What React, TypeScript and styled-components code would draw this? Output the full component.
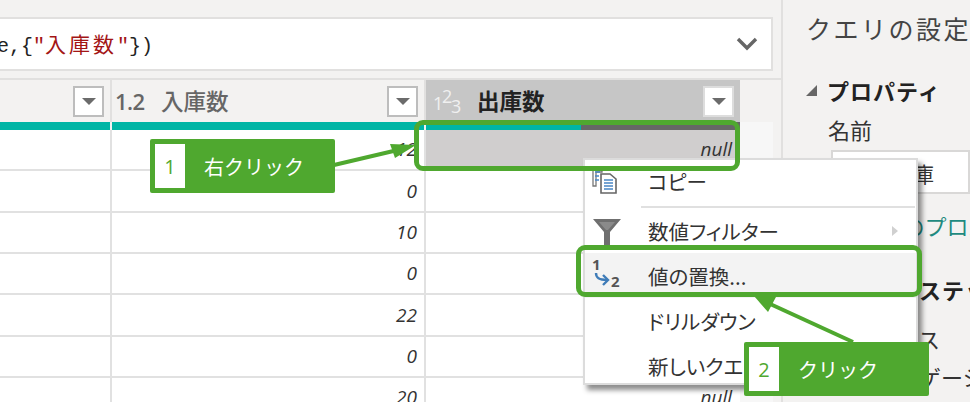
import React from "react";
import styled, { createGlobalStyle } from "styled-components";

const Global = createGlobalStyle`
  html, body { margin: 0; padding: 0; background: #f3f2f1; }
  body { font-family: "Noto Sans CJK JP", "Noto Sans", sans-serif; }
  #root { width: 970px; height: 402px; overflow: hidden; }
`;

const Page = styled.div`
  position: relative;
  width: 970px;
  height: 402px;
  overflow: hidden;
  display: flex;
  background: #f3f2f1;
`;

const Main = styled.div`
  width: 781px;
  flex: none;
  display: flex;
  flex-direction: column;
  padding-top: 17px;
  box-sizing: border-box;
  overflow: hidden;
`;

const FormulaBar = styled.div`
  height: 54px;
  width: 775px;
  flex: none;
  margin-left: -2px;
  box-sizing: border-box;
  background: #fff;
  border: 2px solid #e1e0df;
  display: flex;
  align-items: center;
  justify-content: space-between;
  padding-right: 13px;
  overflow: hidden;
`;

const Code = styled.div`
  font-family: "Liberation Mono", "Noto Sans CJK JP", monospace;
  font-size: 20px;
  color: #222;
  margin-left: -3px;
  margin-top: -2px;
  white-space: pre;
  display: flex;
  align-items: baseline;
`;

const Str = styled.span`
  color: #a31515;
`;

const StrCjk = styled.span`
  color: #a31515;
  font-family: "Noto Sans CJK JP", sans-serif;
  font-size: 21px;
  letter-spacing: 3px;
`;

const Grid = styled.div`
  margin-top: 7px;
  flex: none;
  height: 340px;
  display: flex;
  flex-direction: column;
  border-top: 2px solid #e1e0df;
  background: linear-gradient(to right, #fff 740px, #f7f7f7 740px, #f7f7f7 773px, #f3f2f1 773px);
`;

const HeaderRow = styled.div`
  display: grid;
  grid-template-columns: 112px 314px 314px;
  height: 42px;
  flex: none;
  background: #f3f2f1;
`;

const HeaderCell = styled.div<{ $selected?: boolean }>`
  box-sizing: border-box;
  display: flex;
  align-items: center;
  padding: 0 6px 0 3px;
  border-right: ${(p) => (p.$selected ? "0" : "2px solid #e1e0df")};
  background: ${(p) => (p.$selected ? "#c6c6c6" : "#f3f2f1")};
  color: ${(p) => (p.$selected ? "#222" : "#666")};
  font-size: 22.5px;
  font-weight: ${(p) => (p.$selected ? 700 : 500)};
`;

const TypeLabel = styled.span`
  font-family: "Open Sans", sans-serif;
  font-weight: 600;
  font-size: 22px;
  width: 46px;
  flex: none;
  letter-spacing: -0.5px;
`;

const TypeDigits = styled.span`
  position: relative;
  width: 46px;
  height: 34px;
  flex: none;
  margin-left: 2px;
  color: #f0f0f0;
  font-family: "Open Sans", sans-serif;
  font-weight: 400;
`;

const Digit = styled.span<{ $x: number; $y: number }>`
  position: absolute;
  left: ${(p) => p.$x}px;
  top: ${(p) => p.$y}px;
  font-size: 18px;
  line-height: 18px;
`;

const ColName = styled.span`
  flex: 1;
  line-height: 30px;
  margin-top: -3px;
`;

const FilterButton = styled.div<{ $selected?: boolean }>`
  width: 31px;
  height: 31px;
  box-sizing: border-box;
  flex: none;
  background: #fff;
  border: 2px solid ${(p) => (p.$selected ? "#ddd" : "#bdbdbd")};
  display: flex;
  align-items: center;
  justify-content: center;
  &::after {
    content: "";
    border-left: 7px solid transparent;
    border-right: 7px solid transparent;
    border-top: 7px solid #6b6b6b;
  }
`;

const QualityRow = styled.div`
  display: grid;
  grid-template-columns: 110px 2px 312px 2px 314px;
  height: 8px;
  flex: none;
`;

const Quality = styled.div`
  background: #00b5a5;
`;

const QualityGap = styled.div`
  background: #f3f2f1;
`;

const QualitySplit = styled.div`
  background: linear-gradient(to right, #00b5a5 155px, #666 155px);
`;

const Row = styled.div`
  display: grid;
  grid-template-columns: 112px 314px 314px;
  height: 41.35px;
  flex: none;
`;

const Cell = styled.div<{ $selected?: boolean; $last?: boolean }>`
  box-sizing: border-box;
  border-right: ${(p) => (p.$last ? "0" : "2px solid #e1e1e1")};
  border-bottom: 2px solid #e1e1e1;
  background: ${(p) => (p.$selected ? "#d0cece" : "#fff")};
  display: flex;
  align-items: center;
  justify-content: flex-end;
  padding-right: ${(p) => (p.$last ? "8px" : "7px")};
  padding-bottom: 1px;
  font-family: "Open Sans", sans-serif;
  font-style: italic;
  font-size: 19px;
  color: #333;
`;

const Side = styled.aside`
  flex: 1;
  border-left: 2px solid #e1e0df;
  padding: 11px 0 0 23px;
  box-sizing: border-box;
  color: #333;
  white-space: nowrap;
  overflow: hidden;
`;

const SideTitle = styled.div`
  font-size: 25px;
  line-height: 34px;
  letter-spacing: 2.5px;
  color: #444;
`;

const SideHeading = styled.div`
  display: flex;
  align-items: center;
  font-size: 22px;
  font-weight: 700;
  line-height: 30px;
  letter-spacing: 1px;
  color: #222;
  margin-top: 30px;
  &::before {
    content: "";
    width: 0;
    height: 0;
    border-left: 11px solid transparent;
    border-bottom: 11px solid #666;
    margin-right: 10px;
    flex: none;
  }
`;

const SideLabel = styled.div`
  font-size: 22px;
  line-height: 30px;
  margin: 9px 0 0 22px;
`;

const NameInput = styled.div`
  margin: 6px 0 0 25px;
  height: 44px;
  box-sizing: border-box;
  background: #fff;
  border: 2px solid #d9d8d7;
  font-size: 21px;
  line-height: 42px;
  padding-left: 59px;
`;

const SideLink = styled.div`
  font-size: 22px;
  line-height: 30px;
  color: #1e8a80;
  margin: 16px 0 0 33px;
`;

const StepsHeading = styled(SideHeading)`
  margin-top: 34px;
`;

const Step = styled.div<{ $gap: number }>`
  font-size: 22px;
  line-height: 28px;
  margin: ${(p) => p.$gap}px 0 0 69px;
`;

const Menu = styled.div`
  position: absolute;
  left: 583px;
  top: 158px;
  width: 335px;
  height: 227px;
  box-sizing: border-box;
  background: #fff;
  border: 2px solid #dcdcdc;
  box-shadow: 4px 5px 5px rgba(0, 0, 0, 0.45);
  display: flex;
  flex-direction: column;
  padding-top: 1px;
`;

const MenuItem = styled.div<{ $active?: boolean; $first?: boolean }>`
  position: relative;
  height: 45px;
  flex: none;
  box-sizing: border-box;
  padding-bottom: ${(p) => (p.$first ? "5px" : "0")};
  display: grid;
  grid-template-columns: 63px 1fr 24px;
  align-items: center;
  background: ${(p) => (p.$active ? "#f3f3f3" : "transparent")};
  font-size: 20.5px;
  font-feature-settings: "palt";
  color: #333;
`;

const MenuIcon = styled.span`
  display: flex;
  justify-content: flex-start;
  padding-left: 7px;
`;

const Separator = styled.div`
  height: 2px;
  margin: 0 1px 0 56px;
  background: #e0e0e0;
  flex: none;
`;

const SubArrow = styled.span`
  width: 0;
  height: 0;
  border-top: 5px solid transparent;
  border-bottom: 5px solid transparent;
  border-left: 6px solid #d0d0d0;
`;

const Highlight = styled.div<{ $l: number; $t: number; $w: number; $h: number }>`
  position: absolute;
  left: ${(p) => p.$l}px;
  top: ${(p) => p.$t}px;
  width: ${(p) => p.$w}px;
  height: ${(p) => p.$h}px;
  box-sizing: border-box;
  border: 5px solid #4fa82f;
  border-radius: 9px;
`;

const Callout = styled.div<{ $l: number; $t: number }>`
  position: absolute;
  left: ${(p) => p.$l}px;
  top: ${(p) => p.$t}px;
  width: 185px;
  height: 54px;
  box-sizing: border-box;
  padding: 5px;
  background: #4fa82f;
  border-radius: 2px;
  display: flex;
  align-items: stretch;
  color: #fff;
  font-size: 20px;
`;

const CalloutNum = styled.div`
  width: 30px;
  flex: none;
  background: #fff;
  color: #4fa82f;
  font-family: "Open Sans", sans-serif;
  font-size: 20px;
  display: flex;
  align-items: center;
  justify-content: center;
`;

const CalloutText = styled.div`
  display: flex;
  align-items: center;
  padding-left: 19px;
  white-space: nowrap;
`;

const Arrows = styled.svg`
  position: absolute;
  left: 0;
  top: 0;
  pointer-events: none;
`;

const rows = ["12", "0", "10", "0", "22", "0", "20"];
const nulls = ["null", "", "", "", "", "", "null"];

const CopyIcon = () => (
  <svg width="28" height="26" viewBox="0 0 28 26">
    <path d="M1 1h9v3H4v14H1z" fill="#fff" stroke="#777" strokeWidth="1.3" />
    <path d="M3 4h5M3 8h4M3 12h4" stroke="#4a86c5" strokeWidth="1.6" />
    <path d="M9 6h9l6 5v14H9z" fill="#fff" stroke="#666" strokeWidth="1.6" />
    <path d="M12 12h9M12 15h9M12 18h9M12 21h9" stroke="#4a86c5" strokeWidth="1.5" />
  </svg>
);

const FilterIcon = () => (
  <svg width="30" height="30" viewBox="0 0 30 30">
    <path d="M1 3h28l-11 13v14h-6V16z" fill="#6f6f6f" />
    <path d="M7 6h16l-7 8h-2z" fill="#8a8a8a" />
  </svg>
);

const ReplaceIcon = () => (
  <svg width="32" height="34" viewBox="0 0 32 34">
    <text x="0" y="11" fontFamily="'Open Sans', sans-serif" fontWeight="700" fontSize="15" fill="#555">1</text>
    <text x="19" y="28" fontFamily="'Open Sans', sans-serif" fontWeight="700" fontSize="15" fill="#555">2</text>
    <path d="M4 14c0 5 3 7 11 7" fill="none" stroke="#3f7cb8" strokeWidth="2.4" />
    <path d="M11 16l5 5-5 5" fill="none" stroke="#3f7cb8" strokeWidth="2.4" />
  </svg>
);

export default function App() {
  return (
    <Page>
      <Global />
      <Main>
        <FormulaBar>
          <Code>
            e,{"{"}
            <Str>"</Str>
            <StrCjk>入庫数</StrCjk>
            <Str>"</Str>
            {"})"}
          </Code>
          <svg width="22" height="14" viewBox="0 0 22 14">
            <path d="M2 2l9 9 9-9" fill="none" stroke="#666" strokeWidth="3.4" />
          </svg>
        </FormulaBar>
        <Grid>
          <HeaderRow>
            <HeaderCell>
              <ColName />
              <FilterButton />
            </HeaderCell>
            <HeaderCell>
              <TypeLabel>1.2</TypeLabel>
              <ColName>入庫数</ColName>
              <FilterButton />
            </HeaderCell>
            <HeaderCell $selected>
              <TypeDigits>
                <Digit $x={2} $y={10}>1</Digit>
                <Digit $x={11} $y={3}>2</Digit>
                <Digit $x={20} $y={13}>3</Digit>
              </TypeDigits>
              <ColName>出庫数</ColName>
              <FilterButton $selected />
            </HeaderCell>
          </HeaderRow>
          <QualityRow>
            <Quality />
            <QualityGap />
            <Quality />
            <QualityGap />
            <QualitySplit />
          </QualityRow>
          {rows.map((v, i) => (
            <Row key={i}>
              <Cell />
              <Cell>{v}</Cell>
              <Cell $last $selected={i === 0}>{nulls[i]}</Cell>
            </Row>
          ))}
        </Grid>
      </Main>
      <Side>
        <SideTitle>クエリの設定</SideTitle>
        <SideHeading>プロパティ</SideHeading>
        <SideLabel>名前</SideLabel>
        <NameInput>在庫</NameInput>
        <SideLink>すべてのプロパティ</SideLink>
        <StepsHeading>適用したステップ</StepsHeading>
        <Step $gap={20}>ソース</Step>
        <Step $gap={10}>ナビゲーション</Step>
      </Side>
      <Menu>
        <MenuItem $first>
          <MenuIcon><CopyIcon /></MenuIcon>
          <span>コピー</span>
        </MenuItem>
        <Separator />
        <MenuItem>
          <MenuIcon><FilterIcon /></MenuIcon>
          <span>数値フィルター</span>
          <SubArrow />
        </MenuItem>
        <MenuItem $active>
          <MenuIcon><ReplaceIcon /></MenuIcon>
          <span>値の置換...</span>
        </MenuItem>
        <MenuItem>
          <span />
          <span>ドリルダウン</span>
        </MenuItem>
        <MenuItem>
          <span />
          <span>新しいクエリ</span>
        </MenuItem>
      </Menu>
      <Highlight $l={414} $t={120} $w={326} $h={51} />
      <Highlight $l={576} $t={245} $w={346} $h={52} />
      <Arrows width="970" height="402" viewBox="0 0 970 402">
        <path d="M334 165L402 149" stroke="#4fa82f" strokeWidth="4" fill="none" />
        <path d="M416 145L390 144L395 158z" fill="#4fa82f" />
        <path d="M853 342L768 303" stroke="#4fa82f" strokeWidth="4" fill="none" />
        <path d="M754 296L776 297L768 312z" fill="#4fa82f" />
      </Arrows>
      <Callout $l={150} $t={139}>
        <CalloutNum>1</CalloutNum>
        <CalloutText>右クリック</CalloutText>
      </Callout>
      <Callout $l={744} $t={342}>
        <CalloutNum>2</CalloutNum>
        <CalloutText>クリック</CalloutText>
      </Callout>
    </Page>
  );
}
